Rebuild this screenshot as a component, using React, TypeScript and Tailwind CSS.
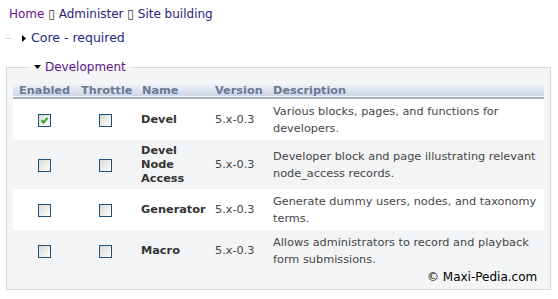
import React from "react";

type Row = {
  enabled: boolean;
  name: string[];
  version: string;
  desc: string;
  shaded: boolean;
};

const rows: Row[] = [
  {
    enabled: true,
    name: ["Devel"],
    version: "5.x-0.3",
    desc: "Various blocks, pages, and functions for developers.",
    shaded: false,
  },
  {
    enabled: false,
    name: ["Devel", "Node", "Access"],
    version: "5.x-0.3",
    desc: "Developer block and page illustrating relevant node_access records.",
    shaded: true,
  },
  {
    enabled: false,
    name: ["Generator"],
    version: "5.x-0.3",
    desc: "Generate dummy users, nodes, and taxonomy terms.",
    shaded: false,
  },
  {
    enabled: false,
    name: ["Macro"],
    version: "5.x-0.3",
    desc: "Allows administrators to record and playback form submissions.",
    shaded: true,
  },
];

const Box = ({ checked }: { checked?: boolean }) => (
  <span className="inline-flex w-[13px] h-[13px] items-center justify-center border border-[#1c5180] bg-linear-to-br from-[#dad9d2] to-white">
    {checked && (
      <svg width="9" height="9" viewBox="0 0 9 9">
        <path d="M1.5 4.2 L3.5 6.5 L7.5 1.8" stroke="#21a121" strokeWidth="1.8" fill="none" />
      </svg>
    )}
  </span>
);

export default function App() {
  return (
    <div className="relative w-[558px] h-[299px] overflow-hidden bg-white font-['DejaVu_Sans',Verdana,sans-serif] text-[#3b3b3b]">
      {/* Breadcrumb */}
      <div className="pt-[7px] pl-[9px] text-[12px] leading-[15px]">
        <a className="text-[#6b0f8f]">Home</a>
        <span className="text-[#333]"> ▯ </span>
        <a className="text-[#2c2379]">Administer</a>
        <span className="text-[#333]"> ▯ </span>
        <a className="text-[#2c2379]">Site building</a>
      </div>

      {/* Collapsed fieldset */}
      <div className="flex items-center mt-[8px] h-[16px]">
        <div className="ml-[5px] w-[7px] h-px bg-[#d5d8dc]" />
        <svg className="ml-[10px]" width="4" height="7" viewBox="0 0 4 7">
          <path d="M0 0 L4 3.5 L0 7 Z" fill="#000" />
        </svg>
        <span className="ml-[5px] text-[12.5px] text-[#1c2a86]">Core - required</span>
      </div>

      {/* Development fieldset */}
      <fieldset className="ml-[6px] mr-[7px] mt-[14px] border border-[#d5d8dc] bg-[#f4f5f6] pl-[6px] pr-[5px] pb-[18px]">
        <legend className="ml-[16px] px-[5px] flex items-center text-[12px] leading-[14px] text-[#5a1587]">
          <svg className="mr-[4px]" width="7" height="4" viewBox="0 0 7 4">
            <path d="M0 0 L7 0 L3.5 4 Z" fill="#000" />
          </svg>
          Development
        </legend>

        <table className="mt-[9px] w-[531px] table-fixed border-collapse text-[11.3px]">
          <colgroup>
            <col className="w-[62px]" />
            <col className="w-[61px]" />
            <col className="w-[73px]" />
            <col className="w-[58px]" />
            <col />
          </colgroup>
          <thead>
            <tr className="bg-linear-to-b from-[#f3f5f9] to-[#ccd5e6] border-b-2 border-[#a7b2c5] text-[#6b7895]">
              {["Enabled", "Throttle", "Name", "Version", "Description"].map((h) => (
                <th key={h} className="pl-[6px] text-left font-bold leading-[13px] pt-[1px]">
                  {h}
                </th>
              ))}
            </tr>
          </thead>
          <tbody>
            {rows.map((r) => (
              <tr key={r.name.join(" ")} className={r.shaded ? "bg-[#f3f4f5]" : "bg-white"}>
                <td className="pt-[4px] pb-[3px] align-middle">
                  <div className="flex justify-center">
                    <Box checked={r.enabled} />
                  </div>
                </td>
                <td className="pt-[4px] pb-[3px] align-middle">
                  <div className="flex justify-center">
                    <Box />
                  </div>
                </td>
                <td className="pl-[5px] pt-[4px] pb-[3px] align-middle font-bold text-[#333] leading-[14px]">
                  {r.name.map((n) => (
                    <div key={n}>{n}</div>
                  ))}
                </td>
                <td className="pl-[6px] pt-[4px] pb-[3px] align-middle text-[#444]">{r.version}</td>
                <td className="pl-[6px] pt-[4px] pb-[3px] align-middle leading-[17px] text-[#464646]">
                  {r.desc}
                </td>
              </tr>
            ))}
          </tbody>
        </table>
      </fieldset>

      {/* Watermark */}
      <div className="absolute left-[427px] top-[269px] text-[12px] leading-[16px] text-black">
        © Maxi-Pedia.com
      </div>
    </div>
  );
}
